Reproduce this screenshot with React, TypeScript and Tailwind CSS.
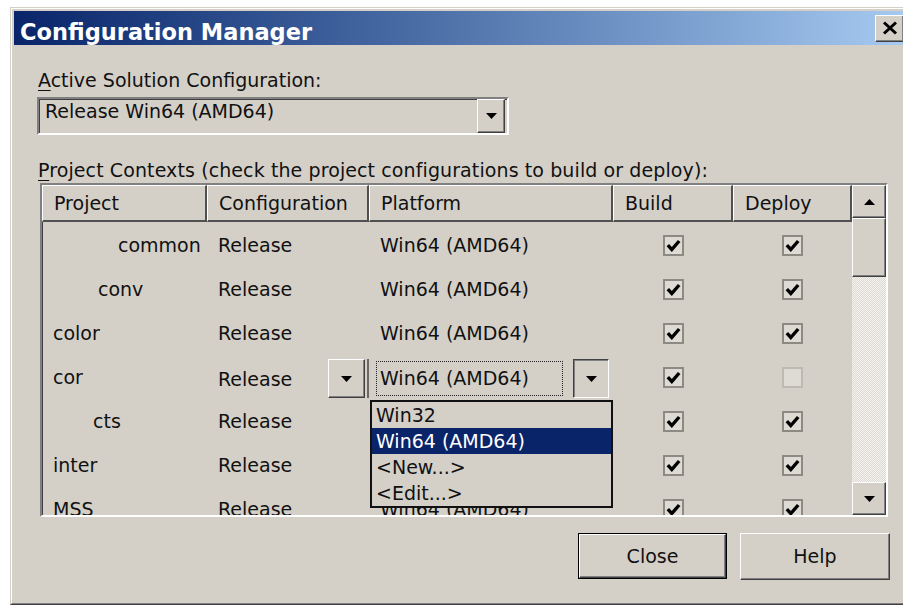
import React from "react";

interface ProjectRow {
  name: string;
  indent: string;
  build: boolean;
  deploy: boolean;
}

const projects: ProjectRow[] = [
  { name: "common", indent: "pl-[76px]", build: true, deploy: true },
  { name: "conv", indent: "pl-[56px]", build: true, deploy: true },
  { name: "color", indent: "pl-[11px]", build: true, deploy: true },
  { name: "cor", indent: "pl-[11px]", build: true, deploy: false },
  { name: "cts", indent: "pl-[51px]", build: true, deploy: true },
  { name: "inter", indent: "pl-[11px]", build: true, deploy: true },
  { name: "MSS", indent: "pl-[11px]", build: true, deploy: true },
];

const platformOptions = ["Win32", "Win64 (AMD64)", "<New...>", "<Edit...>"];

// classic 3D edges
const raised =
  "bg-[#d4d0c8] border border-t-white border-l-white border-r-[#404040] border-b-[#404040] shadow-[inset_-1px_-1px_0_#808080]";
const pressed =
  "bg-[#d4d0c8] border border-t-[#404040] border-l-[#404040] border-r-white border-b-white shadow-[inset_1px_1px_0_#808080]";
const sunken =
  "border-2 border-t-[#808080] border-l-[#808080] border-r-white border-b-white shadow-[inset_1px_1px_0_#404040]";

const Arrow: React.FC<{ up?: boolean }> = ({ up }) => (
  <svg width="11" height="6" viewBox="0 0 11 6">
    <path d={up ? "M0 6h11L5.5 0z" : "M0 0h11L5.5 6z"} fill="#000" />
  </svg>
);

const Checkbox: React.FC<{ checked: boolean }> = ({ checked }) => (
  <div
    className={`w-[21px] h-[21px] border-2 flex items-center justify-center bg-[#dedbd5] ${
      checked ? "border-[#8d8a84]" : "border-[#bdbab4]"
    }`}
  >
    {checked && (
      <svg width="15" height="13" viewBox="0 0 15 13">
        <path d="M1.8 6.2l4 4.3L13.2 2" stroke="#000" strokeWidth="3.4" fill="none" />
      </svg>
    )}
  </div>
);

const HeaderCell: React.FC<{ width: string; label: string }> = ({ width, label }) => (
  <div
    className={`${width} h-full flex items-center pl-[11px] bg-[#d4d0c8] border-t border-l border-t-white border-l-white border-r-2 border-b-2 border-r-[#505050] border-b-[#505050]`}
  >
    {label}
  </div>
);

export default function App() {
  return (
    <div className="w-[903px] h-[605px] overflow-hidden bg-white pl-[10px] pt-[7px] font-['DejaVu_Sans',sans-serif] text-[19px] leading-[23px] text-[#111]">
      <div className="w-[900px] h-[598px] bg-[#d4d0c8] border border-t-[#d4d0c8] border-l-[#d4d0c8] border-r-[#404040] border-b-[#404040]">
        <div className="h-full flex flex-col p-[2px] border border-t-white border-l-white border-r-[#808080] border-b-[#808080]">
          {/* title bar */}
          <div className="h-[34px] flex items-center justify-between pl-[6px] pr-[2px] bg-gradient-to-r from-[#0a246a] to-[#a6caf0]">
            <span className="mt-[7px] text-white font-bold text-[22.5px] leading-[26px]">
              Configuration Manager
            </span>
            <div className={`${raised} w-[29px] h-[27px] flex items-center justify-center`}>
              <svg width="16" height="14" viewBox="0 0 16 14">
                <path d="M2 1.5l12 11M14 1.5l-12 11" stroke="#000" strokeWidth="3" />
              </svg>
            </div>
          </div>

          {/* body */}
          <div className="flex flex-col pl-[24px] pt-[24px]">
            <div>
              <span className="underline underline-offset-[3px]">A</span>ctive Solution Configuration:
            </div>

            <div className={`${sunken} mt-[5px] -ml-px w-[472px] h-[38px] flex items-start`}>
              <div className="flex-1 pl-[6px] pt-px">Release Win64 (AMD64)</div>
              <div className={`${raised} w-[28px] h-full mr-[2px] flex items-center justify-center`}>
                <Arrow />
              </div>
            </div>

            <div className="mt-[24px] tracking-[0.1px]">
              <span className="underline underline-offset-[3px]">P</span>roject Contexts (check the project
              configurations to build or deploy):
            </div>

            {/* project grid */}
            <div className={`${sunken} mt-px ml-[2px] w-[848px] h-[334px] flex`}>
              <div className="relative w-[810px] h-full flex flex-col">
                <div className="h-[37px] flex">
                  <HeaderCell width="w-[165px]" label="Project" />
                  <HeaderCell width="w-[162px]" label="Configuration" />
                  <HeaderCell width="w-[244px]" label="Platform" />
                  <HeaderCell width="w-[120px]" label="Build" />
                  <HeaderCell width="w-[119px]" label="Deploy" />
                </div>

                <div className="flex-1 overflow-hidden pt-px">
                  {projects.map((p) => {
                    const editing = p.name === "cor";
                    return (
                      <div key={p.name} className="h-[44px] flex items-center">
                        <div className={`w-[165px] ${p.indent}`}>{p.name}</div>
                        {editing ? (
                          <>
                            <div className="w-[162px] h-full flex items-start pt-[4px]">
                              <span className="flex-1 pl-[11px] self-center">Release</span>
                              <div className={`${raised} w-[37px] h-[39px] flex items-center justify-center`}>
                                <Arrow />
                              </div>
                              <div className="w-[2px] h-[39px] ml-[2px] bg-[#6a6864]" />
                            </div>
                            <div className="w-[244px] h-full flex items-start pt-[4px] pl-[7px]">
                              <div className="mt-[2px] w-[187px] h-[35px] border border-dotted border-[#222] flex items-center pl-[3px]">
                                Win64 (AMD64)
                              </div>
                              <div className={`${pressed} ml-[10px] w-[36px] h-[39px] flex items-center justify-center pl-px pt-px`}>
                                <Arrow />
                              </div>
                            </div>
                          </>
                        ) : (
                          <>
                            <div className="w-[162px] pl-[11px]">Release</div>
                            <div className="w-[244px] pl-[11px]">Win64 (AMD64)</div>
                          </>
                        )}
                        <div className="w-[120px] flex justify-center">
                          <Checkbox checked={p.build} />
                        </div>
                        <div className="w-[119px] flex justify-center">
                          <Checkbox checked={p.deploy} />
                        </div>
                      </div>
                    );
                  })}
                </div>

                {/* open platform list */}
                <div className="absolute left-[328px] top-[215px] w-[243px] border-2 border-[#111] bg-[#d4d0c8] flex flex-col">
                  {platformOptions.map((opt) => (
                    <div
                      key={opt}
                      className={`h-[26px] flex items-center pl-[4px] ${
                        opt === "Win64 (AMD64)" ? "bg-[#0a246a] text-white" : ""
                      }`}
                    >
                      {opt}
                    </div>
                  ))}
                </div>
              </div>

              {/* vertical scrollbar */}
              <div className="w-[34px] h-full flex flex-col">
                <div className={`${raised} h-[33px] flex items-center justify-center`}>
                  <Arrow up />
                </div>
                <div className={`${raised} h-[59px]`} />
                <div className="flex-1 bg-[repeating-conic-gradient(#f4f3f1_0_25%,#dcd9d3_0_50%)] bg-size-[2px_2px]" />
                <div className={`${raised} h-[33px] flex items-center justify-center`}>
                  <Arrow />
                </div>
              </div>
            </div>

            {/* dialog buttons */}
            <div className="mt-[16px] w-[852px] flex justify-end gap-[13px]">
              <div className="w-[149px] h-[46px] border border-black">
                <div className={`${raised} h-full flex items-center justify-center`}>Close</div>
              </div>
              <div className={`${raised} w-[150px] h-[47px] flex items-center justify-center`}>Help</div>
            </div>
          </div>
        </div>
      </div>
    </div>
  );
}
